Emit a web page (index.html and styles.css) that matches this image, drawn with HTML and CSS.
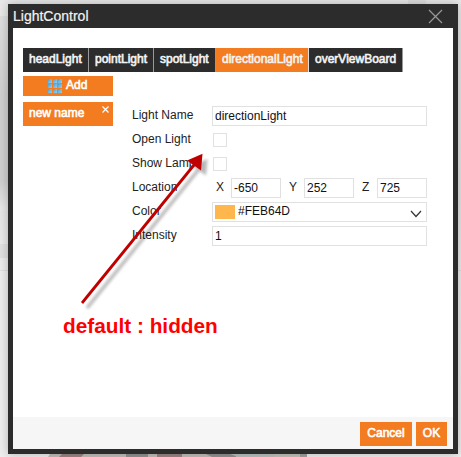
FILE: index.html
```html
<!DOCTYPE html>
<html lang="en">
<head>
<meta charset="utf-8">
<title>LightControl</title>
<link rel="stylesheet" href="styles.css">
</head>
<body>
<svg class="backdrop" width="461" height="457" viewBox="0 0 461 457">
  <defs><linearGradient id="shade" x1="0" y1="0" x2="0" y2="1"><stop offset="0" stop-color="#dedede"/><stop offset=".4" stop-color="#cfcfcf"/><stop offset=".85" stop-color="#cfcfcf"/><stop offset="1" stop-color="#e8e8e8"/></linearGradient></defs>
  <path d="M0 17H8V210H0Z" fill="url(#shade)"/>
  <path d="M0 16.500H8M0 270.500H8M453 270.500H461" stroke="#dedede"/>
  <path d="M0 244H8V258H0Z" fill="#e0e0e0"/>
  <path d="M408 0H426V4H408Z" fill="#dedede"/>
  <path d="M50 454H275V457H48Z" fill="#c0bdba"/>
  <path d="M62 454H84L81 457H59ZM157 454H182V457H157Z" fill="#9c8585"/>
  <path d="M126 454H148V457H126ZM206 454H230L238 457H212Z" fill="#929292"/>
  <path d="M236 454H270V457H236Z" fill="#b8c0c0"/>
  <path d="M274 454H300V457H274Z" fill="#c2c1b9"/>
  <path d="M300 454H307V457H300Z" fill="#a1a1a1"/>
</svg>
<div class="dialog">
  <header class="title">
    <span>LightControl</span>
    <svg class="close" width="15" height="15" viewBox="0 0 15 15"><path d="M1 1L14 14M14 1L1 14" stroke="#989898" stroke-width="1.200" fill="none"/></svg>
  </header>
  <main class="content">
    <nav class="tabs">
      <span class="tab head">headLight</span>
      <span class="tab point">pointLight</span>
      <span class="tab spot">spotLight</span>
      <span class="tab directional active">directionalLight</span>
      <span class="tab board">overViewBoard</span>
    </nav>
    <div class="columns">
      <aside class="side">
        <div class="add">
          <svg width="14" height="14" viewBox="0 0 14 14">
            <defs><linearGradient id="cell" x1="0" y1="0" x2="1" y2="1"><stop offset="0" stop-color="#45a3dc"/><stop offset="1" stop-color="#a4cbe2"/></linearGradient></defs>
            <g fill="url(#cell)">
              <rect width="4" height="4"/><rect x="5" width="4" height="4"/><rect x="10" width="4" height="4"/>
              <rect y="5" width="4" height="4"/><rect x="5" y="5" width="4" height="4"/><rect x="10" y="5" width="4" height="4"/>
              <rect y="10" width="4" height="4"/><rect x="5" y="10" width="4" height="4"/><rect x="10" y="10" width="4" height="4"/>
            </g>
          </svg>
          <span>Add</span>
        </div>
        <div class="item"><span>new name</span>
          <svg width="7" height="7" viewBox="0 0 7 7"><path d="M.5.5L6.500 6.500M6.500.5L.5 6.500" stroke="#fff" stroke-width="1.200"/></svg>
        </div>
      </aside>
      <div class="form">
        <div class="row"><label>Light Name</label><div class="field">directionLight</div></div>
        <div class="row"><label>Open Light</label><div class="check"></div></div>
        <div class="row"><label>Show Lamp</label><div class="check"></div></div>
        <div class="row"><label>Location</label>
          <div class="axes">
            <span class="axis">X</span><div class="field">-650</div>
            <span class="axis">Y</span><div class="field">252</div>
            <span class="axis">Z</span><div class="field">725</div>
          </div>
        </div>
        <div class="row"><label>Color</label>
          <div class="field color"><i class="swatch"></i><span>#FEB64D</span>
            <svg width="12" height="8" viewBox="0 0 12 8"><path d="M1 1L6 6.500L11 1" stroke="#333" stroke-width="1.200" fill="none"/></svg>
          </div>
        </div>
        <div class="row"><label>Intensity</label><div class="field">1</div></div>
      </div>
    </div>
  </main>
  <footer class="actions"><span class="button cancel">Cancel</span><span class="button ok">OK</span></footer>
</div>
<svg class="arrow" width="461" height="457" viewBox="0 0 461 457">
  <defs><filter id="soft" x="-20%" y="-20%" width="140%" height="140%"><feGaussianBlur stdDeviation="1.500"/></filter></defs>
  <g transform="translate(5 5)" opacity=".28" filter="url(#soft)">
    <path d="M82 303L194 164" stroke="#000" stroke-width="3.500"/><path d="M202.500 154L187 160.500L201 170.500Z"/>
  </g>
  <path d="M82 303L194 165" stroke="#c00000" stroke-width="2.800"/>
  <path d="M202.500 153.800L187 160.500L201 170.500Z" fill="#c00000"/>
</svg>
<div class="note">default : hidden</div>
</body>
</html>
```
FILE: styles.css
```css
* { box-sizing: border-box; }
body {
  margin: 0;
  width: 461px;
  height: 457px;
  padding: 4px 0 0 8px;
  overflow: hidden;
  position: relative;
  background: linear-gradient(#e8e8e8 0, #e4e4e4 200px, #ececec 260px, #eee 457px);
  font: 12px/14px "Liberation Sans", Arial, sans-serif;
  color: #222;
}
.backdrop, .arrow { position: absolute; left: 0; top: 0; pointer-events: none; }
.dialog {
  position: relative;
  display: flex;
  flex-direction: column;
  width: 450px;
  height: 450px;
  padding: 0 5px 5px;
  background: #2c2c2c;
  box-shadow: 0 0 9px rgba(0, 0, 0, .25);
}
.title {
  display: flex;
  justify-content: space-between;
  height: 24px;
  padding: 4px 10px 0 0;
  font-size: 14px;
  line-height: 16px;
  color: #f2f2f2;
  -webkit-text-stroke: .2px;
}
.close { margin-top: 1px; }
.content { flex: 1; padding: 20px 10px 0; background: #fff; }
.tabs { display: flex; height: 24px; }
.tab, .side, .button { -webkit-text-stroke: .6px; }
.tab {
  border-right: 1px solid #999;
  background: #2c2c2c;
  color: #f4f4f4;
  line-height: 22px;
  padding-left: 6px;
  white-space: nowrap;
}
.head { width: 66px; }
.point { width: 65px; }
.spot { width: 62px; }
.directional { width: 93px; }
.board { width: 94px; }
.active { background: #f37b20; border-right-color: #ddd; }
.columns { display: flex; padding-top: 4px; }
.side { width: 90px; color: #fff; }
.add {
  display: flex;
  gap: 4px;
  height: 20px;
  padding: 2px 0 0 25px;
  background: #f37b20;
}
.add svg { margin-top: 1px; }
.item {
  display: flex;
  justify-content: space-between;
  height: 24px;
  margin-top: 6px;
  padding: 4px 4px 0 6px;
  background: #f37b20;
}
.form {
  display: flex;
  flex-direction: column;
  gap: 4px;
  width: 295px;
  margin: 30px 0 0 19px;
}
.row { display: flex; height: 20px; }
.row label { width: 80px; padding-top: 2px; }
.field {
  flex: 1;
  height: 20px;
  border: 1px solid #e1e1e1;
  padding: 2px 0 0 2px;
  background: #fff;
  color: #111;
}
.check { width: 14px; height: 14px; margin: 3px 0 0 1px; border: 1px solid #e1e1e1; }
.axes { display: flex; flex: 1; gap: 8px; }
.axes .field { flex: 0 0 50px; }
.axis { width: 7px; padding-top: 2px; }
.axis:first-child { width: 11px; padding-left: 4px; }
.color { display: flex; padding: 1px 4px 0 2px; }
.swatch { width: 20px; height: 14px; margin: 1px 3px 0 0; background: #feb64d; }
.color svg { margin: 6px 0 0 auto; }
.actions {
  display: flex;
  justify-content: flex-end;
  gap: 4px;
  height: 32px;
  padding: 5px 6px 3px 0;
  background: #f6f6f6;
}
.button {
  background: #f37b20;
  color: #fff;
  line-height: 22px;
  text-align: center;
}
.cancel { width: 52px; }
.ok { width: 31px; }
.note {
  position: absolute;
  left: 63px;
  top: 314px;
  font-size: 20.8px;
  font-weight: bold;
  line-height: 24px;
  color: #f00;
  white-space: nowrap;
}
```
